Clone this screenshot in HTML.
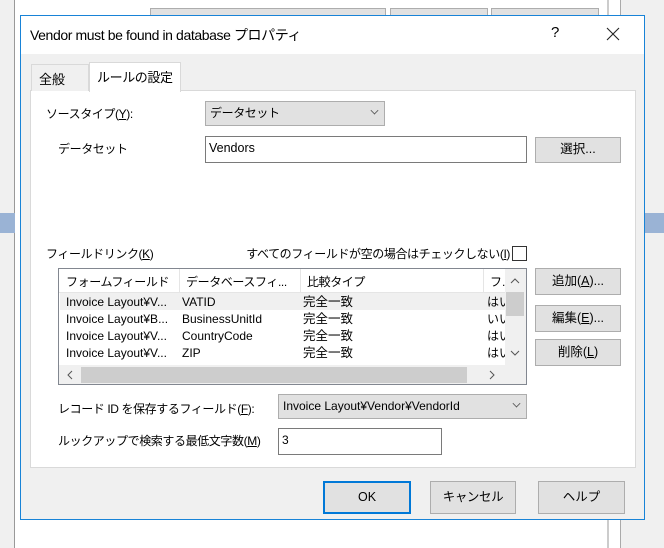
<!DOCTYPE html>
<html><head><meta charset="utf-8"><style>
*{box-sizing:border-box;margin:0;padding:0}
body{width:664px;height:548px;position:relative;overflow:hidden;background:#fff;font-family:"Liberation Sans","Noto Sans CJK JP",sans-serif;font-size:12px;color:#000}
.a{position:absolute}
.j{letter-spacing:-0.4px}
.btn{position:absolute;background:#e1e1e1;border:1px solid #adadad;text-align:center;font-size:12.5px}
.cb{position:absolute;background:#e1e1e1;border:1px solid #adadad;padding-left:4px}
.tb{position:absolute;background:#fff;border:1px solid #7a7a7a;padding-left:3px}
.chev{position:absolute;right:6px;top:5px;width:7px;height:7px;border-right:1px solid #555;border-bottom:1px solid #555;transform:rotate(45deg) scale(.8)}
u{text-decoration:underline}
</style></head><body>
<div class="a" style="left:0;top:0;width:15px;height:548px;background:#f0f0f0;border-right:1px solid #999"></div>
<div class="a" style="left:0;top:213px;width:15px;height:20px;background:#9ab3d5"></div>
<div class="a" style="left:150px;top:8px;width:236px;height:8px;background:#e1e1e1;border:1px solid #adadad"></div>
<div class="a" style="left:390px;top:8px;width:98px;height:8px;background:#e1e1e1;border:1px solid #adadad"></div>
<div class="a" style="left:491px;top:8px;width:108px;height:8px;background:#e1e1e1;border:1px solid #adadad"></div>
<div class="a" style="left:607px;top:0;width:2px;height:548px;background:#ccc"></div>
<div class="a" style="left:620px;top:0;width:44px;height:548px;background:#f0f0f0;border-left:1px solid #aaa"></div>
<div class="a" style="left:645px;top:213px;width:19px;height:20px;background:#9ab3d5"></div>
<div class="a" style="left:20px;top:15px;width:625px;height:505px;background:#f0f0f0;border:1px solid #1883d7"></div>
<div class="a" style="left:21px;top:16px;width:623px;height:38px;background:#fff"></div>
<div class="a j" style="left:30px;top:25px;font-size:14px">Vendor must be found in database プロパティ</div>
<div class="a" style="left:551px;top:24px;font-size:15px">?</div>
<svg class="a" style="left:606px;top:27px" width="14" height="14"><path d="M1 1L13 13M13 1L1 13" stroke="#222" stroke-width="1.1"/></svg>
<div class="a" style="left:30px;top:90px;width:606px;height:378px;background:#fff;border:1px solid #d9d9d9"></div>
<div class="a" style="left:31px;top:64px;width:58px;height:27px;background:#f0f0f0;border:1px solid #d9d9d9;border-bottom:none;padding:4px 0 0 7px;font-size:13px">全般</div>
<div class="a j" style="left:89px;top:62px;width:92px;height:30px;background:#fff;border:1px solid #d9d9d9;border-bottom:none;padding:4px 0 0 7px;font-size:13px">ルールの設定</div>
<div class="a j" style="left:46px;top:105px">ソースタイプ(<u>Y</u>):</div>
<div class="cb j" style="left:205px;top:101px;width:180px;height:25px;line-height:22px">データセット<div class="chev"></div></div>
<div class="a j" style="left:58px;top:140px">データセット</div>
<div class="tb" style="left:205px;top:136px;width:322px;height:27px;line-height:22px;font-size:12.5px">Vendors</div>
<div class="btn" style="left:535px;top:137px;width:86px;height:26px;line-height:23px">選択...</div>
<div class="a j" style="left:46px;top:245px">フィールドリンク(<u>K</u>)</div>
<div class="a j" style="left:234px;top:245px;width:276px;text-align:right;white-space:nowrap">すべてのフィールドが空の場合はチェックしない(<u>I</u>)</div>
<div class="a" style="left:512px;top:246px;width:15px;height:15px;border:1px solid #333;background:#fff"></div>
<div class="a" style="left:58px;top:268px;width:469px;height:117px;border:1px solid #828790;background:#fff;overflow:hidden">
 <div class="a" style="left:0;top:0;width:446px;height:24px;border-bottom:1px solid #e5e5e5"></div>
 <div class="a" style="left:120px;top:0;height:24px;border-left:1px solid #e5e5e5"></div>
 <div class="a" style="left:241px;top:0;height:24px;border-left:1px solid #e5e5e5"></div>
 <div class="a" style="left:424px;top:0;height:24px;border-left:1px solid #e5e5e5"></div>
 <div class="a j" style="left:7px;top:4px">フォームフィールド</div>
 <div class="a j" style="left:127px;top:4px">データベースフィ...</div>
 <div class="a j" style="left:248px;top:4px">比較タイプ</div>
 <div class="a" style="left:431px;top:4px">フ.</div>
 <div class="a" style="left:1px;top:24px;width:445px;height:17px;background:#f0f0f0"></div>
 <div class="a" style="left:7px;top:25px;line-height:17px;font-size:12px">Invoice Layout¥V...<br>Invoice Layout¥B...<br>Invoice Layout¥V...<br>Invoice Layout¥V...</div>
 <div class="a" style="left:123px;top:25px;line-height:17px;font-size:12px">VATID<br>BusinessUnitId<br>CountryCode<br>ZIP</div>
 <div class="a" style="left:244px;top:25px;line-height:17px;font-size:12.5px">完全一致<br>完全一致<br>完全一致<br>完全一致</div>
 <div class="a" style="left:428px;top:25px;line-height:17px;font-size:12px">はい<br>いい<br>はい<br>はい</div>
 <div class="a" style="left:446px;top:0;width:22px;height:96px;background:#f0f0f0"></div>
 <div class="a" style="left:447px;top:23px;width:18px;height:24px;background:#cdcdcd"></div>
 <svg class="a" style="left:451px;top:9px" width="10" height="6"><path d="M1 5L5 1L9 5" stroke="#555" fill="none"/></svg>
 <svg class="a" style="left:451px;top:81px" width="10" height="6"><path d="M1 1L5 5L9 1" stroke="#555" fill="none"/></svg>
 <div class="a" style="left:0;top:96px;width:469px;height:20px;background:#f0f0f0"></div>
 <div class="a" style="left:22px;top:98px;width:386px;height:16px;background:#cdcdcd"></div>
 <svg class="a" style="left:8px;top:101px" width="6" height="10"><path d="M5 1L1 5L5 9" stroke="#555" fill="none"/></svg>
 <svg class="a" style="left:430px;top:101px" width="6" height="10"><path d="M1 1L5 5L1 9" stroke="#555" fill="none"/></svg>
</div>
<div class="btn" style="left:535px;top:268px;width:86px;height:27px;line-height:24px">追加(<u>A</u>)...</div>
<div class="btn" style="left:535px;top:305px;width:86px;height:27px;line-height:24px">編集(<u>E</u>)...</div>
<div class="btn" style="left:535px;top:339px;width:86px;height:27px;line-height:24px">削除(<u>L</u>)</div>
<div class="a j" style="left:58px;top:400px">レコード ID を保存するフィールド(<u>F</u>):</div>
<div class="cb" style="left:278px;top:394px;width:249px;height:25px;line-height:22px;font-size:12px">Invoice Layout¥Vendor¥VendorId<div class="chev"></div></div>
<div class="a j" style="left:58px;top:432px;white-space:nowrap">ルックアップで検索する最低文字数(<u>M</u>)</div>
<div class="tb" style="left:278px;top:428px;width:164px;height:27px;line-height:22px">3</div>
<div class="btn" style="left:323px;top:481px;width:88px;height:33px;line-height:29px;border:2px solid #0078d7">OK</div>
<div class="btn j" style="left:430px;top:481px;width:86px;height:33px;line-height:31px">キャンセル</div>
<div class="btn" style="left:538px;top:481px;width:87px;height:33px;line-height:31px">ヘルプ</div>
</body></html>
